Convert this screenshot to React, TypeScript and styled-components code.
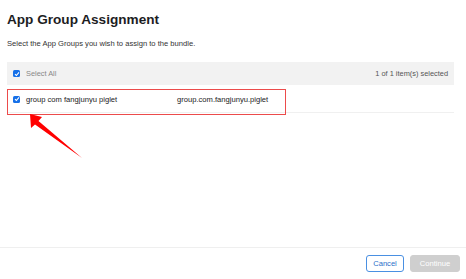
import React from "react";
import styled, { createGlobalStyle } from "styled-components";

const Global = createGlobalStyle`
  html, body { margin: 0; padding: 0; background: #fff; }
  body { font-family: "Liberation Sans", Arial, sans-serif; color: #1d1d1f; }
  * { box-sizing: border-box; }
`;

const Page = styled.div`
  position: relative;
  width: 466px;
  height: 279px;
  display: flex;
  flex-direction: column;
  overflow: hidden;
`;

const Content = styled.div`
  padding: 12px 12px 0 7px;
  flex: 1;
`;

const Title = styled.h1`
  margin: 0;
  font-size: 13.6px;
  line-height: 16px;
  font-weight: 700;
  color: #1d1d1f;
`;

const Subtitle = styled.p`
  margin: 11px 0 0 0;
  font-size: 7.6px;
  line-height: 9px;
  color: #333;
`;

const Table = styled.div`
  position: relative;
  margin-top: 14px;
`;

const HeaderBar = styled.div`
  height: 23px;
  background: #f2f2f2;
  display: flex;
  align-items: center;
  padding: 0 6px 0 6px;
  font-size: 7.4px;
  color: #888;
`;

const Row = styled.div`
  height: 28px;
  display: flex;
  align-items: center;
  padding: 1px 6px 0;
  border-bottom: 1px solid #f0f0f0;
  font-size: 7.6px;
  color: #222;
`;

const Label = styled.span<{ $w?: number }>`
  margin-left: 6px;
  width: ${(p) => (p.$w ? `${p.$w}px` : "auto")};
  white-space: nowrap;
`;

const Count = styled.span`
  margin-left: auto;
  color: #555;
`;

const Box = styled.span`
  width: 7px;
  height: 7px;
  border-radius: 1.5px;
  background: #1670e8;
  display: inline-flex;
  align-items: center;
  justify-content: center;
  flex: none;
`;

const Highlight = styled.div`
  position: absolute;
  left: 0;
  top: 27px;
  width: 279px;
  height: 26px;
  border: 1px solid #ec4b4b;
  pointer-events: none;
`;

const Arrow = styled.svg`
  position: absolute;
  left: 0;
  top: 0;
  pointer-events: none;
`;

const Footer = styled.div`
  border-top: 1px solid #efefef;
  height: 32px;
  display: flex;
  justify-content: flex-end;
  align-items: flex-start;
  padding: 7px 6px 0 0;
  gap: 6px;
`;

const Button = styled.button<{ $primary?: boolean }>`
  height: 17px;
  padding: 0;
  width: ${(p) => (p.$primary ? "50px" : "38px")};
  border-radius: 3px;
  font-family: "Liberation Sans", Arial, sans-serif;
  font-size: 7.6px;
  border: 1px solid ${(p) => (p.$primary ? "#cfcfcf" : "#4a90e2")};
  background: ${(p) => (p.$primary ? "#cfcfcf" : "#fff")};
  color: ${(p) => (p.$primary ? "#fff" : "#2a6fc9")};
`;

const Check = () => (
  <Box>
    <svg width="6" height="6" viewBox="0 0 6 6">
      <path d="M1 3.1 L2.4 4.5 L5 1.4" stroke="#fff" strokeWidth="1.1" fill="none" />
    </svg>
  </Box>
);

export default function App() {
  return (
    <Page>
      <Global />
      <Content>
        <Title>App Group Assignment</Title>
        <Subtitle>Select the App Groups you wish to assign to the bundle.</Subtitle>
        <Table>
          <HeaderBar>
            <Check />
            <Label>Select All</Label>
            <Count>1 of 1 item(s) selected</Count>
          </HeaderBar>
          <Row>
            <Check />
            <Label $w={151}>group com fangjunyu piglet</Label>
            <span>group.com.fangjunyu.piglet</span>
          </Row>
          <Highlight />
        </Table>
      </Content>
      <Footer>
        <Button>Cancel</Button>
        <Button $primary disabled>Continue</Button>
      </Footer>
      <Arrow width="466" height="279" viewBox="0 0 466 279">
        <polygon points="30,114 42,117 38.5,121 82,158 35,124.5 31,128" fill="#ff0000" />
      </Arrow>
    </Page>
  );
}
